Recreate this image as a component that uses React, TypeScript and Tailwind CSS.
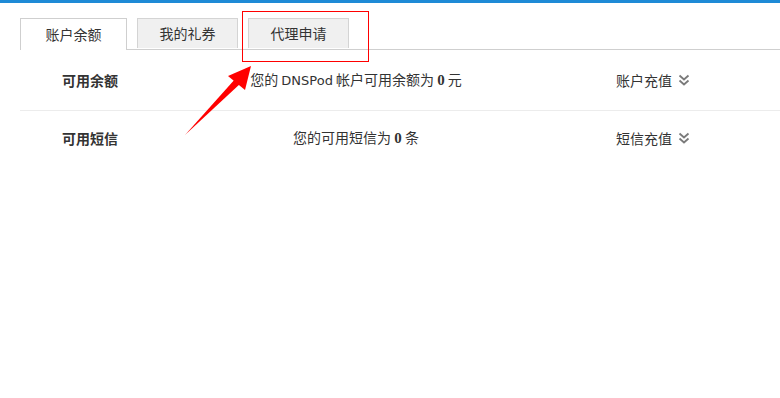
const tabs = [
  { name: "账户余额", width: "w-[107px]", active: true },
  { name: "我的礼券", width: "w-[101px]", active: false },
  { name: "代理申请", width: "w-[101px]", active: false },
];

const rows = [
  {
    label: "可用余额",
    text: (
      <>
        您的 <span className="font-['DejaVu_Sans',sans-serif] text-[13px]">DNSPod</span> 帐户可用余额为{" "}
        <b className="font-['Liberation_Serif',serif] text-[15px]">0</b> 元
      </>
    ),
    action: "账户充值",
    height: "h-[61px]",
  },
  {
    label: "可用短信",
    text: (
      <>
        您的可用短信为 <b className="font-['Liberation_Serif',serif] text-[15px]">0</b> 条
      </>
    ),
    action: "短信充值",
    height: "h-[54px]",
  },
];

function DoubleChevron() {
  return (
    <svg width="12" height="12" viewBox="0 0 12 12" fill="none" stroke="#7a7a7a" strokeWidth="1.8">
      <path d="M1.5 1.5 L6 5.5 L10.5 1.5" />
      <path d="M1.5 6.5 L6 10.5 L10.5 6.5" />
    </svg>
  );
}

export default function App() {
  return (
    <div className="relative h-[398px] w-[780px] overflow-hidden bg-white font-['Noto_Sans_CJK_SC',sans-serif] text-[14px] text-[#333]">
      <div className="h-[3px] bg-[#1e8ad6]" />

      {/* tabs */}
      <div className="ml-[20px] mt-[15px] flex gap-[10px] border-b border-[#cfcfcf]">
        {tabs.map((t) => (
          <div
            key={t.name}
            className={
              t.active
                ? `${t.width} -mb-px flex h-[32px] items-center justify-center border border-b-0 border-[#cfcfcf] bg-white`
                : `${t.width} flex h-[30px] items-center justify-center border border-b-0 border-[#d4d4d4] bg-[#f0f0f0]`
            }
          >
            {t.name}
          </div>
        ))}
      </div>

      {/* rows */}
      <div className="ml-[20px]">
        {rows.map((r, i) => (
          <div
            key={r.label}
            className={`${r.height} flex items-center ${i === 0 ? "border-b border-[#ececec]" : ""}`}
          >
            <div className="w-[160px] pl-[42px] font-bold">{r.label}</div>
            <div className="w-[352px] text-center">{r.text}</div>
            <div className="ml-[84px] flex items-center gap-[6px]">
              {r.action}
              <DoubleChevron />
            </div>
          </div>
        ))}
      </div>

      {/* annotation */}
      <div className="absolute left-[242px] top-[11px] h-[51px] w-[127px] border border-[#f00]" />
      <svg className="absolute left-0 top-0" width="780" height="398">
        <polygon points="185,135 241,83 236,78" fill="#f00" />
        <polygon points="251,66 245,90 228,76" fill="#f00" />
      </svg>
    </div>
  );
}
